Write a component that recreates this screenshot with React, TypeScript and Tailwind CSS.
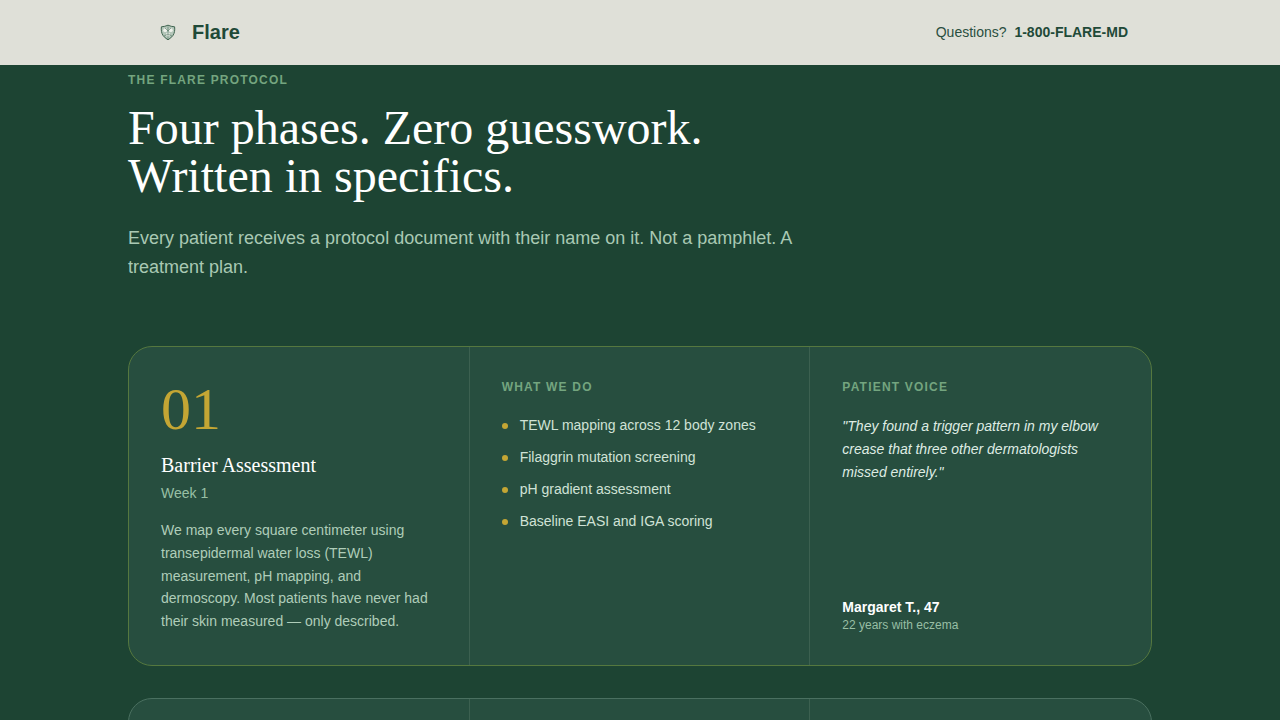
const sans = "font-['Liberation_Sans',Arial,sans-serif]";
const serif = "font-['Liberation_Serif','Times_New_Roman',serif]";

const steps = [
  'TEWL mapping across 12 body zones',
  'Filaggrin mutation screening',
  'pH gradient assessment',
  'Baseline EASI and IGA scoring',
];

function FlareMark() {
  return (
    <svg width="16" height="17" viewBox="0 0 16 17" fill="none">
      <path d="M8 1.2 C10 2.2 12.4 2.6 14.6 2.8 C15 6 14.6 9 13 11.4 C11.8 13.2 10 14.6 8 15.8 C6 14.6 4.2 13.2 3 11.4 C1.4 9 1 6 1.4 2.8 C3.6 2.6 6 2.2 8 1.2 Z" stroke="#3f6450" strokeWidth="1" fill="#b4c6b9" />
      <circle cx="5.2" cy="6.2" r="1.9" fill="#f0f2ec" />
      <circle cx="10.8" cy="6.2" r="1.9" fill="#f0f2ec" />
      <circle cx="8" cy="10.6" r="2" fill="#f0f2ec" />
      <path d="M8 2.5V15M5 4l3 3 3-3M4 12l4-2 4 2" stroke="#3f6450" strokeWidth="0.5" />
    </svg>
  );
}

export default function App() {
  return (
    <div className={`h-screen overflow-hidden bg-[#1d4433] ${sans}`}>
      <header className="h-[65px] bg-[#dfe0d8]">
        <div className="mx-auto flex h-16 max-w-[1024px] items-center justify-between pl-8 pr-6">
          <div className="flex items-center gap-4">
            <FlareMark />
            <span className="text-xl font-semibold text-[#1f4a38]">Flare</span>
          </div>
          <div className="text-sm text-[#2a4f40]">
            Questions? <span className="ml-1 font-semibold text-[#1f4a38]">1-800-FLARE-MD</span>
          </div>
        </div>
      </header>

      <main className="mx-auto max-w-[1024px]">
        <p className="mt-[7px] text-xs font-semibold leading-4 tracking-[0.1em] text-[#74a57f]">THE FLARE PROTOCOL</p>
        <h1 className={`mt-4 text-5xl leading-[48px] text-white ${serif}`}>
          Four phases. Zero guesswork.
          <br />
          Written in specifics.
        </h1>
        <p className="mt-6 max-w-[672px] text-lg leading-[29px] text-[#a9c9b3]">
          Every patient receives a protocol document with their name on it. Not a pamphlet. A treatment plan.
        </p>

        <section className="mt-16 grid h-[320px] grid-cols-3 rounded-3xl border border-[#55783f] bg-[#274e3f]">
          <div className="border-r border-[#3c6050] px-8 pt-8">
            <div className={`text-6xl leading-[60px] text-[#c4a634] ${serif}`}>01</div>
            <h2 className={`mt-3 text-xl leading-7 text-white ${serif}`}>Barrier Assessment</h2>
            <p className="mt-1 text-sm leading-5 text-[#98c0a5]">Week 1</p>
            <p className="mt-4 text-sm leading-[22.75px] text-[#afcdb9]">
              We map every square centimeter using transepidermal water loss (TEWL) measurement, pH mapping, and dermoscopy. Most patients have never had their skin measured — only described.
            </p>
          </div>
          <div className="border-r border-[#3c6050] px-8 pt-8">
            <h3 className="text-xs font-semibold leading-4 tracking-[0.1em] text-[#74a57f]">WHAT WE DO</h3>
            <ul className="mt-5 flex flex-col gap-3">
              {steps.map((step) => (
                <li key={step} className="flex items-start gap-3 text-sm leading-5 text-[#d0e2d6]">
                  <span className="mt-2 h-1.5 w-1.5 rounded-full bg-[#c4a634]" />
                  {step}
                </li>
              ))}
            </ul>
          </div>
          <div className="flex flex-col justify-between px-8 pb-8 pt-8">
            <div>
              <h3 className="text-xs font-semibold leading-4 tracking-[0.1em] text-[#74a57f]">PATIENT VOICE</h3>
              <p className="mt-5 text-sm italic leading-[22.75px] text-[#dfece3]">
                "They found a trigger pattern in my elbow crease that three other dermatologists missed entirely."
              </p>
            </div>
            <div>
              <p className="text-sm font-semibold leading-5 text-white">Margaret T., 47</p>
              <p className="text-xs leading-4 text-[#98bfa5]">22 years with eczema</p>
            </div>
          </div>
        </section>

        <section className="mt-8 grid h-[320px] grid-cols-3 rounded-3xl border border-[#4a7060] bg-[#274e3f]">
          <div className="border-r border-[#3c6050]" />
          <div className="border-r border-[#3c6050]" />
          <div />
        </section>
      </main>
    </div>
  );
}
